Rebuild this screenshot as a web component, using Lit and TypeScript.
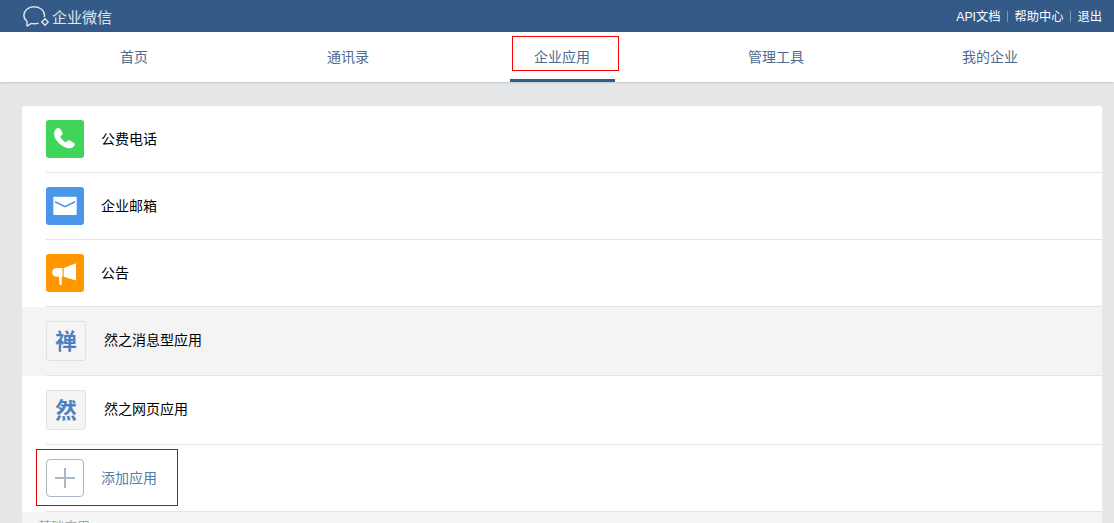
import { LitElement, html, css, svg } from "lit";
import { customElement } from "lit/decorators.js";

const phone = svg`<path d="M9.700 9.200c1.600-1.600 3.900-1.600 4.800 0l2.100 3.700c.5 1-.1 1.700-1 2.400l-1 .8c-.3.300-.3.700-.1 1.100 1.200 2.100 2.900 3.800 4.800 4.900.5.200.9.200 1.200-.2l.9-1c.8-.8 1.700-1 2.600-.4l4 2.600c1 .7 1 1.900.2 2.800-1.600 1.900-3.600 2.700-5.700 2.400-4.200-.6-8.200-3.100-10.900-6.800C9.300 19.700 8.100 16 8.100 13.400c0-1.600.5-3.100 1.600-4.200z" fill="#fff"/>`;
const mail = svg`<rect x="7.300" y="9.700" width="23.400" height="18.300" rx="1" fill="#fff"/><path d="M9 14.700l10 5 10-5" fill="none" stroke="#4a96ea" stroke-width="1.600"/>`;
const horn = svg`<path d="M10.500 14h6v8.700h-.8V31h-2.200l-.5-8.300h-2.500a4.350 4.350 0 0 1 0-8.700zM17.700 14L30 9.300v17.200l-12.300-3.800z" fill="#fff"/>`;

const Icon = (bg: string, body: unknown) =>
  html`<span class="icon" style="background:${bg}"><svg width="38" height="38" viewBox="0 0 38 38">${body}</svg></span>`;

@customElement("app-root")
export class AppRoot extends LitElement {
  static styles = css`
    :host { display: block; position: relative; width: 1114px; height: 523px; overflow: hidden; background: #e6e7e9;
      font-family: "Liberation Sans", "Noto Sans CJK SC", sans-serif; font-size: 14px; }
    .top { height: 32px; background: #345a87; display: flex; align-items: center; justify-content: space-between; padding: 0 12px 0 23px; color: #fff; }
    .logo { display: flex; align-items: center; font-size: 15px; color: #dfe5ec; }
    .logo svg { margin-right: 2px; }
    .links { display: flex; align-items: center; font-size: 12.25px; }
    .sep { width: 1px; height: 11px; background: #7f97b5; margin: 0 6.5px; }
    nav { height: 50px; background: #fff; display: grid; grid-template-columns: repeat(5, 214px); padding-left: 27px; box-shadow: 0 1px 2px rgba(0,0,0,.14); position: relative; }
    nav a { display: flex; align-items: center; justify-content: center; color: #4d6b8f; padding-bottom: 2px; height: 50px; box-sizing: border-box; }
    .cur { position: relative; }
    .cur::after { content: ""; position: absolute; left: 55px; width: 105px; bottom: 0; height: 3px; background: #345a87; }
    .card { margin: 24px 12px 0 22px; background: #fff; border-radius: 3px 3px 0 0; }
    .row { display: flex; align-items: center; height: 67px; margin-left: 24px; border-bottom: 1px solid #e3e4e6; box-sizing: border-box; color: #000; }
    .row > span:last-child { padding-bottom: 2px; }
    .icon { width: 38px; height: 38px; border-radius: 3px; display: block; margin-right: 17px; flex: none; }
    .icon svg { display: block; }
    .wrap { background: #f4f4f4; }
    .wrap.plain { background: #fff; }
    .wrap .row { height: 69px; }
    .wrap .row > span:last-child { padding-bottom: 4px; }
    .char { width: 38px; height: 34px; border: 1px solid #e0e1e3; border-radius: 3px; background: #f5f5f5; color: #4a80bb; font-size: 21.5px; font-weight: 700; display: flex; align-items: center; justify-content: center; margin-right: 18px; flex: none; padding-bottom: 4px; box-sizing: content-box; }
    .add { color: #4d7fae; }
    .plus { width: 36px; height: 36px; border: 1px solid #a9b7c6; border-radius: 4px; margin-right: 17px; flex: none; display: flex; align-items: center; justify-content: center; }
    .base { font-size: 13px; color: #a8a8a8; padding: 6px 0 0 16px; line-height: 18px; background: #f5f5f5; }
    .mark { position: absolute; border: 1px solid #e00; box-sizing: border-box; pointer-events: none; }
    .m1 { left: 512px; top: 36px; width: 107px; height: 35px; border-color: #f00; }
    .m2 { left: 36px; top: 449px; width: 142px; height: 57px; border-color: #d00; }
  `;

  render() {
    return html`
      <div class="top">
        <div class="logo">
          <svg width="27" height="24" viewBox="0 0 27 24" fill="none" stroke="#dfe5ec" stroke-width="1.400">
            <path d="M15.500 19.100c-1.300.5-2.700.7-4.200.7-1.100 0-2.200-.1-3.200-.4L4.500 21.800c-.3.200-.6 0-.6-.3L4 17.500C2 15.800.9 13.600.9 11.300.9 6.600 5.500 2.800 11.200 2.800s10.300 3.800 10.300 8.500c0 .6-.1 1.200-.2 1.800" />
            <path d="M22 14.800l3.200 3.200-3.200 3.200-3.200-3.200z" />
          </svg>
          <span>企业微信</span>
        </div>
        <div class="links"><span>API文档</span><i class="sep"></i><span>帮助中心</span><i class="sep"></i><span>退出</span></div>
      </div>
      <nav>
        <a>首页</a><a>通讯录</a><a class="cur">企业应用</a><a>管理工具</a><a>我的企业</a>
      </nav>
      <div class="card">
        <div class="row">${Icon("#3fd45a", phone)}<span>公费电话</span></div>
        <div class="row">${Icon("#4a96ea", mail)}<span>企业邮箱</span></div>
        <div class="row">${Icon("#ff9800", horn)}<span>公告</span></div>
        <div class="wrap"><div class="row"><span class="char">禅</span><span>然之消息型应用</span></div></div>
        <div class="wrap plain"><div class="row"><span class="char">然</span><span>然之网页应用</span></div></div>
        <div class="row add"><span class="plus"><svg width="20" height="20" viewBox="0 0 20 20"><path d="M0 10h20M10 0v20" stroke="#a9b7c6" stroke-width="2"/></svg></span><span>添加应用</span></div>
        <div class="base">基础应用</div>
      </div>
      <div class="mark m1"></div>
      <div class="mark m2"></div>
    `;
  }
}
